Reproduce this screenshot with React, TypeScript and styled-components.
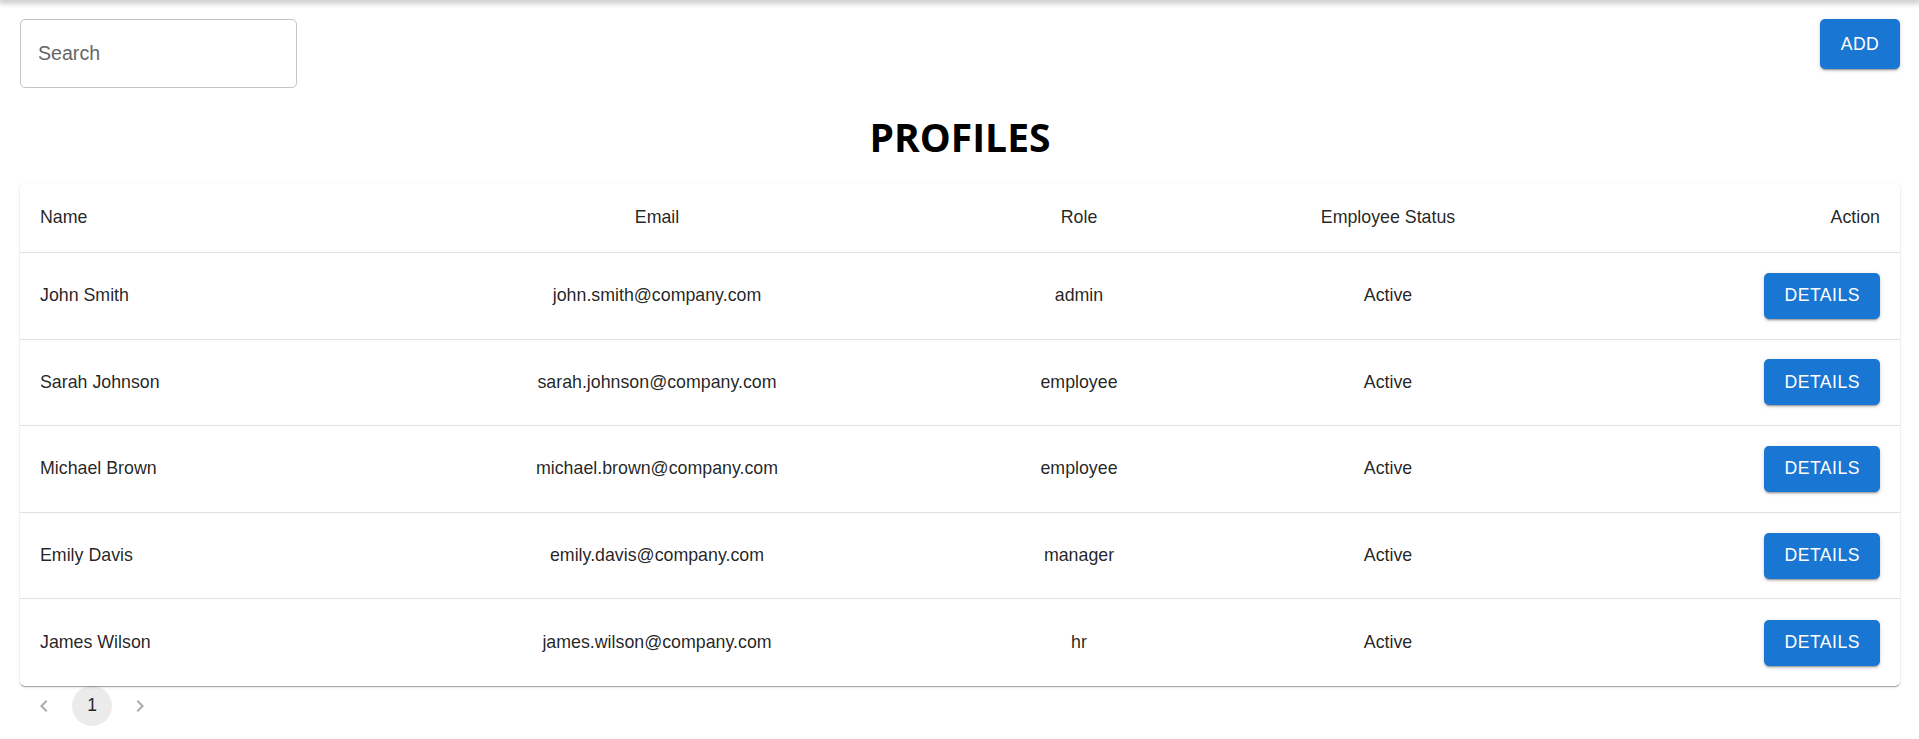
import styled, { createGlobalStyle } from 'styled-components';

const GlobalStyle = createGlobalStyle`
  body {
    margin: 0;
    background: #ffffff;
    font-family: 'Liberation Sans', Arial, sans-serif;
    color: rgba(0, 0, 0, 0.87);
  }
  * {
    box-sizing: border-box;
  }
`;

interface Profile {
  name: string;
  email: string;
  role: string;
  status: string;
}

const profiles: Profile[] = [
  { name: 'John Smith', email: 'john.smith@company.com', role: 'admin', status: 'Active' },
  { name: 'Sarah Johnson', email: 'sarah.johnson@company.com', role: 'employee', status: 'Active' },
  { name: 'Michael Brown', email: 'michael.brown@company.com', role: 'employee', status: 'Active' },
  { name: 'Emily Davis', email: 'emily.davis@company.com', role: 'manager', status: 'Active' },
  { name: 'James Wilson', email: 'james.wilson@company.com', role: 'hr', status: 'Active' },
];

type Align = 'left' | 'center' | 'right';

const columns: { label: string; width: number; align: Align }[] = [
  { label: 'Name', width: 340, align: 'left' },
  { label: 'Email', width: 594, align: 'center' },
  { label: 'Role', width: 250, align: 'center' },
  { label: 'Employee Status', width: 368, align: 'center' },
  { label: 'Action', width: 328, align: 'right' },
];

// shadow of the app bar that sits just above the viewport
const TopShadow = styled.div`
  height: 0;
  box-shadow: 0 0 6px 2px rgba(0, 0, 0, 0.38);
`;

const Page = styled.main`
  padding: 19px 19px 0 20px;
`;

const Toolbar = styled.div`
  display: flex;
  justify-content: space-between;
  align-items: flex-start;
`;

const SearchInput = styled.input`
  width: 277px;
  height: 69px;
  padding: 0 17px;
  border: 1px solid #c4c4c4;
  border-radius: 5px;
  font-family: 'Liberation Sans', Arial, sans-serif;
  font-size: 19.6px;
  color: rgba(0, 0, 0, 0.87);
  outline: none;
  background: #fff;

  &::placeholder {
    color: #666;
    opacity: 1;
  }
`;

const PrimaryButton = styled.button<{ $tall?: boolean }>`
  display: inline-flex;
  align-items: center;
  justify-content: center;
  min-width: 80px;
  height: ${(p) => (p.$tall ? '50px' : '46px')};
  padding: 0 20px;
  border: none;
  border-radius: 5px;
  background: #1976d2;
  color: #fff;
  font-family: 'Liberation Sans', Arial, sans-serif;
  font-size: 17.6px;
  letter-spacing: 0.5px;
  text-transform: uppercase;
  cursor: pointer;
  box-shadow: 0px 3px 1px -2px rgba(0, 0, 0, 0.2), 0px 2px 2px 0px rgba(0, 0, 0, 0.14),
    0px 1px 5px 0px rgba(0, 0, 0, 0.12);
`;

const Title = styled.h1`
  margin: 23px 0 21px;
  text-align: center;
  font-family: 'Open Sans', 'Noto Sans', sans-serif;
  font-weight: 700;
  font-size: 39px;
  line-height: 51px;
  color: #000;
`;

const Card = styled.div`
  background: #fff;
  border-radius: 5px;
  box-shadow: 0px 2px 1px -1px rgba(0, 0, 0, 0.2), 0px 1px 1px 0px rgba(0, 0, 0, 0.14),
    0px 1px 3px 0px rgba(0, 0, 0, 0.12);
  overflow: hidden;
`;

const Table = styled.table`
  width: 100%;
  table-layout: fixed;
  border-collapse: separate;
  border-spacing: 0;
`;

const Col = styled.col<{ $width: number }>`
  width: ${(p) => p.$width}px;
`;

const HeadCell = styled.th<{ $align: Align }>`
  padding: 20px;
  line-height: 29px;
  font-size: 17.8px;
  font-weight: 400;
  text-align: ${(p) => p.$align};
  border-bottom: 1px solid #e0e0e0;
`;

const BodyRow = styled.tr`
  &:last-child td {
    border-bottom: none;
  }
`;

const BodyCell = styled.td<{ $align: Align }>`
  height: 86.6px;
  padding: 0 20px;
  font-size: 17.8px;
  line-height: 29px;
  text-align: ${(p) => p.$align};
  vertical-align: middle;
  border-bottom: 1px solid #e0e0e0;
`;

const Pager = styled.nav`
  display: flex;
  align-items: center;
  gap: 8px;
  padding-left: 4px;
`;

const PageItem = styled.button<{ $selected?: boolean }>`
  display: inline-flex;
  align-items: center;
  justify-content: center;
  width: 40px;
  height: 40px;
  padding: 0;
  border: none;
  border-radius: 50%;
  background: ${(p) => (p.$selected ? 'rgba(0, 0, 0, 0.08)' : 'transparent')};
  color: ${(p) => (p.$selected ? 'rgba(0, 0, 0, 0.87)' : 'rgba(0, 0, 0, 0.33)')};
  font-family: 'Liberation Sans', Arial, sans-serif;
  font-size: 17.5px;
`;

const Chevron = ({ dir }: { dir: 'left' | 'right' }) => (
  <svg width="24" height="24" viewBox="0 0 24 24" fill="currentColor">
    {dir === 'left' ? (
      <path d="M15.41 7.41 14 6l-6 6 6 6 1.41-1.41L10.83 12z" />
    ) : (
      <path d="M10 6 8.59 7.41 13.17 12l-4.58 4.59L10 18l6-6z" />
    )}
  </svg>
);

export default function App() {
  return (
    <>
      <GlobalStyle />
      <TopShadow />
      <Page>
        <Toolbar>
          <SearchInput placeholder="Search" />
          <PrimaryButton $tall>Add</PrimaryButton>
        </Toolbar>
        <Title>PROFILES</Title>
        <Card>
          <Table>
            <colgroup>
              {columns.map((c) => (
                <Col key={c.label} $width={c.width} />
              ))}
            </colgroup>
            <thead>
              <tr>
                {columns.map((c) => (
                  <HeadCell key={c.label} $align={c.align}>
                    {c.label}
                  </HeadCell>
                ))}
              </tr>
            </thead>
            <tbody>
              {profiles.map((p) => (
                <BodyRow key={p.email}>
                  <BodyCell $align="left">{p.name}</BodyCell>
                  <BodyCell $align="center">{p.email}</BodyCell>
                  <BodyCell $align="center">{p.role}</BodyCell>
                  <BodyCell $align="center">{p.status}</BodyCell>
                  <BodyCell $align="right">
                    <PrimaryButton>Details</PrimaryButton>
                  </BodyCell>
                </BodyRow>
              ))}
            </tbody>
          </Table>
        </Card>
        <Pager>
          <PageItem aria-label="previous page">
            <Chevron dir="left" />
          </PageItem>
          <PageItem $selected>1</PageItem>
          <PageItem aria-label="next page">
            <Chevron dir="right" />
          </PageItem>
        </Pager>
      </Page>
    </>
  );
}
